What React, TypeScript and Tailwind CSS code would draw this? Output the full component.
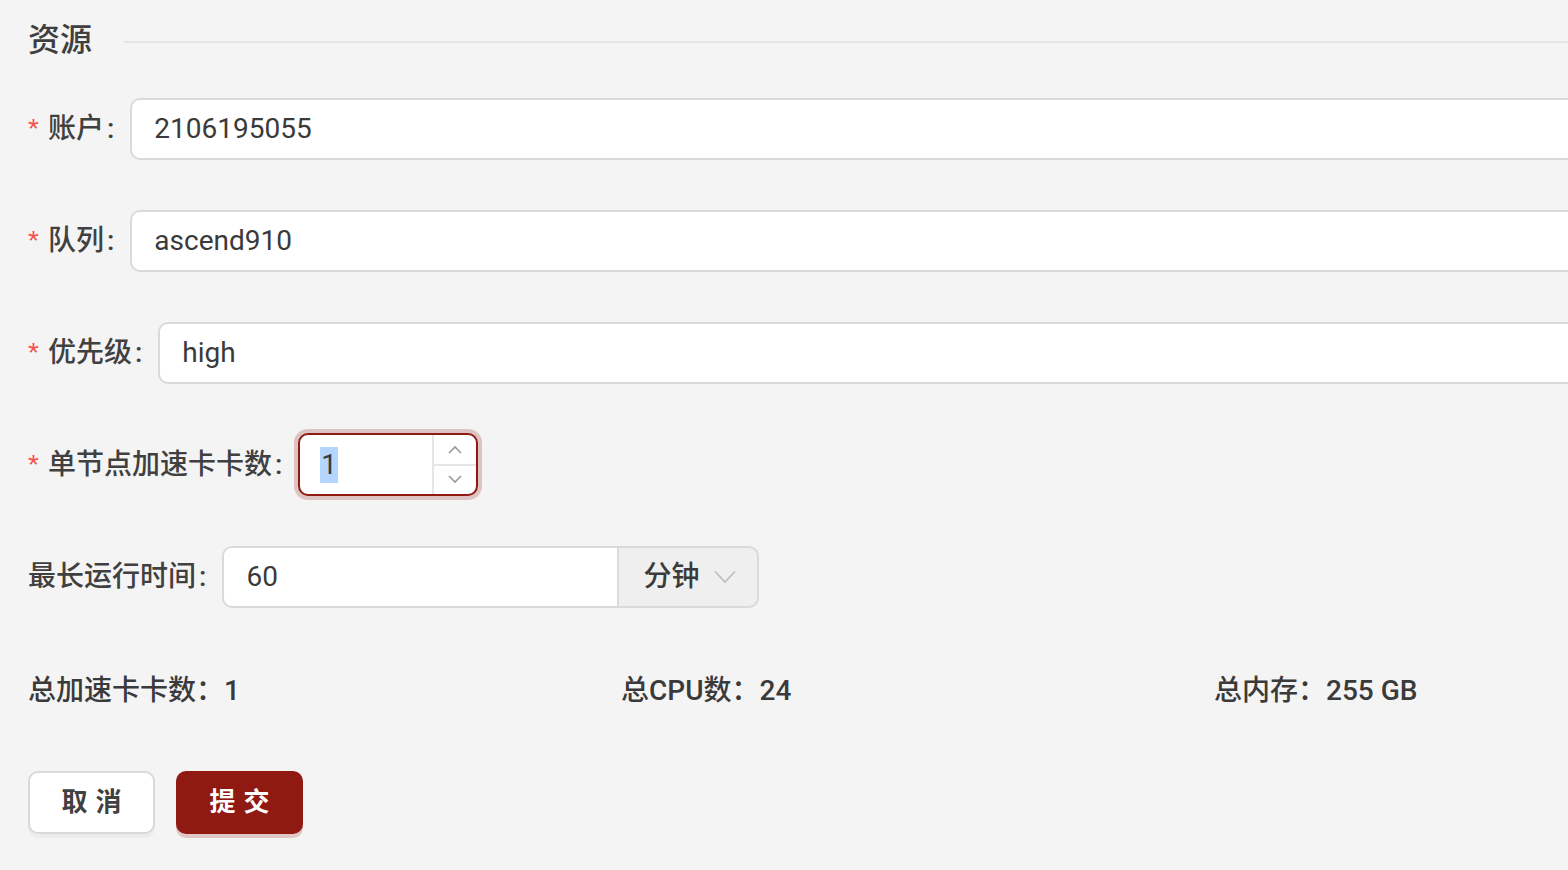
import React from "react";

const FONT = { fontFamily: 'Roboto, "Noto Sans CJK SC", sans-serif' };

function Label({ text, required = true }: { text: string; required?: boolean }) {
  return (
    <div className="flex items-center h-[62px] text-[28px] font-medium text-[#404040] shrink-0 whitespace-nowrap">
      {required && <span className="text-[#f5504c] text-[28px] mr-[9px] leading-none font-normal" style={{ fontFamily: '"Liberation Sans", sans-serif' }}>*</span>}
      <span>{text}</span>
      <span className="ml-[3px] mr-[16px]">:</span>
    </div>
  );
}

function TextInput({ value }: { value: string }) {
  return (
    <div className="flex-1 h-[62px] bg-white border-2 border-[#dadada] rounded-[10px] flex items-center pl-[22px] text-[28px] text-[#3a3a3a]">
      {value}
    </div>
  );
}

export default function App() {
  return (
    <div className="w-[1568px] h-[870px] overflow-hidden bg-[#f4f4f4]" style={FONT}>
      <div className="w-[1810px] pl-[28px] pt-[16px] flex flex-col">
        <div className="flex items-center h-[48px]">
          <span className="text-[32px] font-medium text-[#3f3f3f]">资源</span>
          <div className="flex-1 h-[2px] bg-[#e4e4e4] ml-[32px] mt-[4px]" />
        </div>

        <div className="mt-[34px] flex items-center">
          <Label text="账户" />
          <TextInput value="2106195055" />
        </div>

        <div className="mt-[50px] flex items-center">
          <Label text="队列" />
          <TextInput value="ascend910" />
        </div>

        <div className="mt-[50px] flex items-center">
          <Label text="优先级" />
          <TextInput value="high" />
        </div>

        <div className="mt-[49px] flex items-center">
          <Label text="单节点加速卡卡数" />
          <div className="w-[180px] h-[63px] bg-white border-2 border-[#8f1a12] rounded-[10px] flex shadow-[0_0_0_4px_rgba(143,26,18,0.22)] overflow-hidden">
            <div className="flex-1 flex items-center pl-[20px] text-[28px] text-[#3a3a3a]">
              <span className="bg-[#b4d5fe] leading-[36px] px-[1px]">1</span>
            </div>
            <div className="w-[44px] border-l-2 border-[#e6e6e6] flex flex-col">
              <div className="flex-1 flex items-center justify-center border-b-2 border-[#e6e6e6]">
                <svg width="14" height="9" viewBox="0 0 14 9" fill="none" stroke="#9a9a9a" strokeWidth="1.6"><path d="M1 8 L7 2 L13 8" /></svg>
              </div>
              <div className="flex-1 flex items-center justify-center">
                <svg width="14" height="9" viewBox="0 0 14 9" fill="none" stroke="#9a9a9a" strokeWidth="1.6"><path d="M1 1 L7 7 L13 1" /></svg>
              </div>
            </div>
          </div>
        </div>

        <div className="mt-[50px] flex items-center">
          <Label text="最长运行时间" required={false} />
          <div className="flex h-[62px]">
            <div className="w-[395px] bg-white border-2 border-r-0 border-[#dadada] rounded-l-[10px] flex items-center pl-[22px] text-[28px] text-[#3a3a3a]">
              60
            </div>
            <div className="w-[142px] bg-[#efefef] border-2 border-[#dadada] rounded-r-[10px] flex items-center pl-[24px] text-[28px] font-medium text-[#3a3a3a]">
              <span>分钟</span>
              <svg className="ml-[15px]" width="22" height="14" viewBox="0 0 22 14" fill="none" stroke="#bdbdbd" strokeWidth="1.8"><path d="M1 1.5 L11 12 L21 1.5" /></svg>
            </div>
          </div>
        </div>

        <div className="mt-[52px] h-[62px] flex items-center text-[28px] font-medium text-[#3a3a3a]">
          <div className="w-[593px]">总加速卡卡数：1</div>
          <div className="w-[593px]">总CPU数：24</div>
          <div className="w-[593px]">总内存：255 GB</div>
        </div>

        <div className="mt-[49px] flex items-start gap-[21px]">
          <button className="w-[127px] h-[63px] bg-white border-2 border-[#d9d9d9] rounded-[10px] text-[26px] font-semibold text-[#404040] tracking-[8px] pl-[8px] shadow-[0_4px_0_rgba(0,0,0,0.03)]">
            取消
          </button>
          <button className="w-[127px] h-[63px] bg-[#8f1a12] rounded-[10px] text-[26px] font-semibold text-white tracking-[8px] pl-[8px] shadow-[0_4px_0_rgba(143,26,18,0.2)]">
            提交
          </button>
        </div>
      </div>
    </div>
  );
}
